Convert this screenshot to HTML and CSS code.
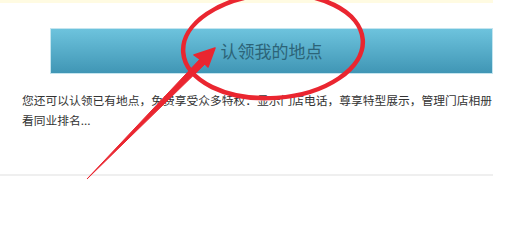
FILE: index.html
```html
<!DOCTYPE html>
<html lang="zh-CN">
<head>
<meta charset="utf-8">
<link rel="stylesheet" href="styles.css">
</head>
<body>
<div class="page">
  <div class="notice"></div>
  <div class="claim-btn">认领我的地点</div>
  <p class="desc">您还可以认领已有地点，免费享受众多特权：显示门店电话，尊享特型展示，管理门店相册看同业排名...</p>
  <div class="divider"></div>
  <svg class="marks" width="510" height="245" viewBox="0 0 510 245">
    <ellipse cx="273" cy="46" rx="90" ry="52" transform="rotate(-4 273 46)" fill="none" stroke="#ea2630" stroke-width="4.5"/>
    <path d="M87 179 L201 58 L206 63 Z" fill="#ea2630" stroke="#ea2630" stroke-width="1" stroke-linejoin="round"/>
    <path d="M215 48 L194 55 L201 60 L208 67 Z" fill="#ea2630" stroke="#ea2630" stroke-width="1.5" stroke-linejoin="round"/>
  </svg>
</div>
</body>
</html>
```
FILE: styles.css
```css
html, body {
  margin: 0;
  padding: 0;
  background: #ffffff;
}
.page {
  position: relative;
  width: 493px;
  height: 245px;
  overflow: hidden;
  font-family: "Noto Sans CJK SC", "Noto Sans", sans-serif;
}
.notice {
  height: 3px;
  background: #fffbe2;
}
.claim-btn {
  margin: 25px 0 0 50px;
  height: 44px;
  border: 1px solid #c4e5ef;
  background: linear-gradient(#6dc3dd, #4096b5);
  color: #2c6478;
  font-size: 17px;
  line-height: 44px;
  text-align: center;
}
.desc {
  margin: 16px 0 0 22px;
  width: 471px;
  font-size: 11.75px;
  line-height: 20px;
  color: #333333;
}
.divider {
  margin-top: 44px;
  height: 2px;
  background: #efefef;
}
.marks {
  position: absolute;
  left: 0;
  top: 0;
  pointer-events: none;
}
```
